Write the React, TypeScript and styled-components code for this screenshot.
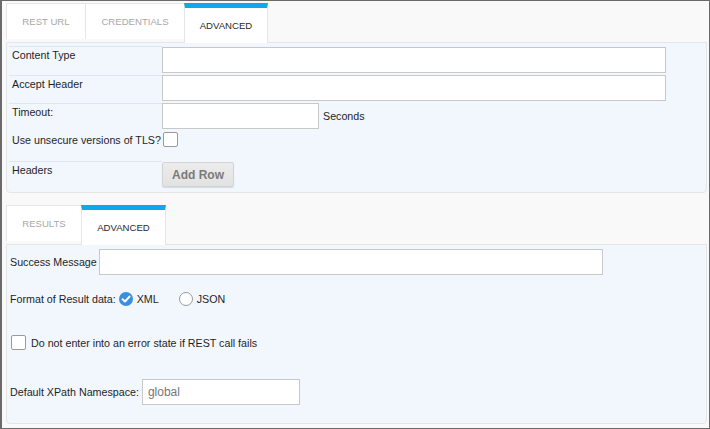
import React from "react";
import styled, { createGlobalStyle } from "styled-components";

const Global = createGlobalStyle`
  html, body { margin: 0; padding: 0; background: #fff; }
  body { font-family: "Liberation Sans", Arial, sans-serif; }
  * { box-sizing: border-box; }
`;

const Frame = styled.div`
  width: 710px;
  height: 429px;
  border: 1px solid #6a6a6a;
  border-left-width: 2px;
  background: #f9f9f9;
  padding: 2px 2px 0 4px;
  display: flex;
  flex-direction: column;
  font-family: "Liberation Sans", Arial, sans-serif;
  font-size: 10.7px;
  color: #1e1e1e;
`;

const TabStrip = styled.div<{ $mt?: number }>`
  display: flex;
  align-items: flex-start;
  height: 39px;
  margin-top: ${(p) => p.$mt ?? 0}px;
`;

const Tab = styled.div<{ $w: number; $active?: boolean }>`
  width: ${(p) => p.$w}px;
  height: ${(p) => (p.$active ? 40 : 36)}px;
  background: #fff;
  border: 1px solid #e6e6e6;
  border-top: ${(p) => (p.$active ? "5px solid #0fa8ea" : "1px solid #e6e6e6")};
  border-bottom: none;
  margin-left: -1px;
  display: flex;
  justify-content: center;
  align-items: center;
  padding-bottom: ${(p) => (p.$active ? 0 : 1)}px;
  font-size: 9.6px;
  text-transform: uppercase;
  color: ${(p) => (p.$active ? "#2a2a2a" : "#a8a8a8")};
  position: relative;
  z-index: ${(p) => (p.$active ? 2 : 0)};
  &:first-child { margin-left: 0; }
`;

const Panel = styled.div<{ $h: number }>`
  height: ${(p) => p.$h}px;
  background: #f2f7fe;
  border: 1px solid #e3e5e8;
  border-radius: 0 0 4px 4px;
  position: relative;
  z-index: 1;
`;

const FormTable = styled.div`
  padding: 3px 0 0 2px;
  display: flex;
  flex-direction: column;
`;

const Row = styled.div<{ $h: number }>`
  display: flex;
  height: ${(p) => p.$h}px;
`;

const LabelCell = styled.div<{ $line?: boolean }>`
  width: 153px;
  flex: none;
  border-top: 1px solid ${(p) => (p.$line ? "#e1e6ee" : "transparent")};
  padding: 1px 0 0 3px;
  line-height: 14px;
  white-space: nowrap;
`;

const FieldCell = styled.div<{ $pt?: number }>`
  flex: 1;
  display: flex;
  align-items: center;
  align-self: flex-start;
  gap: 4px;
  padding-top: ${(p) => p.$pt ?? 1}px;
`;

const TextInput = styled.input<{ $w: number }>`
  width: ${(p) => p.$w}px;
  height: 26px;
  border: 1px solid #c8c8c8;
  background: #fff;
  font-family: "Liberation Sans", Arial, sans-serif;
  font-size: 12px;
  color: #777;
  padding: 0 5px;
  margin: 0;
  outline: none;
`;

const Checkbox = styled.span<{ $ml?: number }>`
  display: inline-block;
  width: 15px;
  height: 15px;
  background: #fff;
  border: 1px solid #9a9a9a;
  border-radius: 2px;
  margin-left: ${(p) => p.$ml ?? 0}px;
  flex: none;
`;

const Button = styled.button`
  width: 72px;
  height: 25px;
  border: 1px solid #d4d4d4;
  border-radius: 2px;
  background: linear-gradient(#ececec, #e2e2e2);
  box-shadow: 0 1px 1px rgba(0, 0, 0, 0.12);
  font-family: "Liberation Sans", Arial, sans-serif;
  font-weight: bold;
  font-size: 12px;
  color: #7a7a7a;
  padding: 0;
  margin: 0;
`;

const Suffix = styled.span``;

const Body = styled.div`
  display: flex;
  flex-direction: column;
  padding: 4px 0 0 3px;
`;

const Line = styled.div<{ $h: number; $gap?: number }>`
  display: flex;
  align-items: center;
  height: ${(p) => p.$h}px;
  gap: ${(p) => p.$gap ?? 2}px;
  white-space: nowrap;
`;

const RadioGroup = styled.label<{ $ml?: number }>`
  display: inline-flex;
  align-items: center;
  gap: 4px;
  margin-left: ${(p) => p.$ml ?? 0}px;
`;

const RadioOff = styled.span`
  width: 14px;
  height: 14px;
  border-radius: 50%;
  border: 1px solid #9a9a9a;
  background: #fff;
  display: inline-block;
`;

const RadioOn = () => (
  <svg width="14" height="14" viewBox="0 0 14 14">
    <circle cx="7" cy="7" r="7" fill="#3a8fe0" />
    <path d="M3.6 7.2 L6 9.5 L10.5 4.6" stroke="#fff" strokeWidth="2" fill="none" strokeLinecap="round" strokeLinejoin="round" />
  </svg>
);

export default function App() {
  return (
    <>
      <Global />
      <Frame>
        <TabStrip>
          <Tab $w={80}>REST URL</Tab>
          <Tab $w={100}>Credentials</Tab>
          <Tab $w={84} $active>Advanced</Tab>
        </TabStrip>
        <Panel $h={151}>
          <FormTable>
            <Row $h={29}>
              <LabelCell $line>Content Type</LabelCell>
              <FieldCell>
                <TextInput $w={504} />
              </FieldCell>
            </Row>
            <Row $h={28}>
              <LabelCell $line>Accept Header</LabelCell>
              <FieldCell $pt={0}>
                <TextInput $w={504} />
              </FieldCell>
            </Row>
            <Row $h={28}>
              <LabelCell $line>Timeout:</LabelCell>
              <FieldCell $pt={0}>
                <TextInput $w={157} />
                <Suffix>Seconds</Suffix>
              </FieldCell>
            </Row>
            <Row $h={30}>
              <LabelCell>Use unsecure versions of TLS?</LabelCell>
              <FieldCell $pt={1}>
                <Checkbox $ml={1} />
              </FieldCell>
            </Row>
            <Row $h={28}>
              <LabelCell $line>Headers</LabelCell>
              <FieldCell $pt={1}>
                <Button>Add Row</Button>
              </FieldCell>
            </Row>
          </FormTable>
        </Panel>
        <TabStrip $mt={12}>
          <Tab $w={76}>Results</Tab>
          <Tab $w={85} $active>Advanced</Tab>
        </TabStrip>
        <Panel $h={180}>
          <Body>
            <Line $h={26}>
              <span>Success Message</span>
              <TextInput $w={504} />
            </Line>
            <Line $h={48}>
              <span>Format of Result data:</span>
              <RadioGroup $ml={1}>
                <RadioOn />
                <span>XML</span>
              </RadioGroup>
              <RadioGroup $ml={18}>
                <RadioOff />
                <span>JSON</span>
              </RadioGroup>
            </Line>
            <Line $h={39} $gap={5}>
              <Checkbox $ml={1} />
              <span>Do not enter into an error state if REST call fails</span>
            </Line>
            <Line $h={60} $gap={3}>
              <span>Default XPath Namespace:</span>
              <TextInput $w={158} defaultValue="global" />
            </Line>
          </Body>
        </Panel>
      </Frame>
    </>
  );
}
